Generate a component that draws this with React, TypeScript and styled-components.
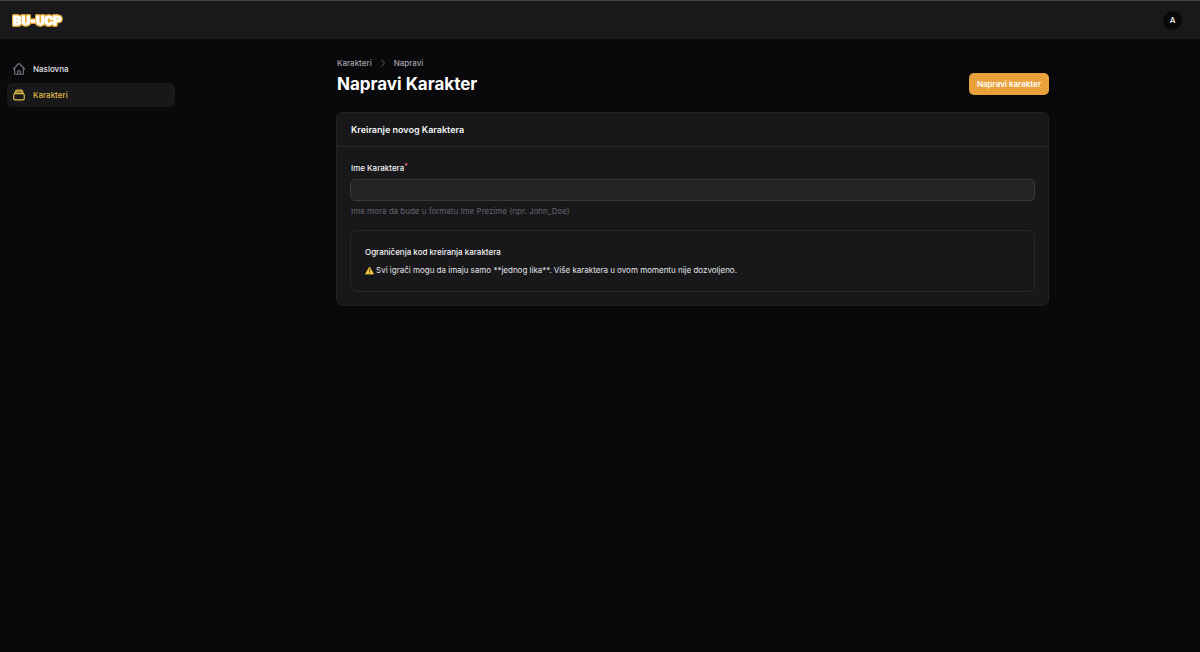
import React from 'react';
import styled, { createGlobalStyle, css } from 'styled-components';
import { HiOutlineHome, HiOutlineRectangleStack, HiOutlineChevronRight } from 'react-icons/hi2';

const GlobalStyle = createGlobalStyle`
  * { box-sizing: border-box; }
  html { background: #09090b; }
  body {
    margin: 0;
    background: #09090b;
    color: #f4f4f5;
    font-family: Inter, "Liberation Sans", sans-serif;
    font-size: 8px;
    line-height: 12px;
  }
  h1, h2, h3, p, ul, ol { margin: 0; padding: 0; }
  ul, ol { list-style: none; }
  a { color: inherit; text-decoration: none; }
  button, input { font: inherit; color: inherit; }
`;

const Page = styled.div`
  display: flex;
  flex-direction: column;
  min-height: 100vh;
`;

const Topbar = styled.header`
  display: flex;
  align-items: center;
  justify-content: space-between;
  height: 39px;
  padding: 0 18px 0 12px;
  border-top: 1px solid #424244;
  background: #19191b;
`;

const LogoLink = styled.a`
  display: block;
  line-height: 0;
`;

const LogoSvg = styled.svg`
  display: block;
  overflow: visible;
`;

const LogoText = styled.text`
  font-family: Roboto, sans-serif;
  font-size: 13px;
  font-weight: 900;
  fill: #fff;
  stroke: #fff;
  stroke-width: 1px;
  stroke-linejoin: miter;
  filter: drop-shadow(1px 0 0 #e5ab36) drop-shadow(-1px 0 0 #e5ab36)
    drop-shadow(0 1px 0 #e5ab36) drop-shadow(0 -1px 0 #e5ab36);
`;

const Avatar = styled.button`
  display: grid;
  place-items: center;
  width: 19px;
  height: 19px;
  padding: 0;
  border: 0;
  border-radius: 50%;
  background: #09090b;
  color: #fff;
  font-size: 8px;
  font-weight: 500;
`;

const Body = styled.div`
  display: flex;
  flex: 1;
`;

const Sidebar = styled.nav`
  flex: none;
  width: 185px;
  padding: 18px 10px 18px 7px;
`;

const NavList = styled.ul`
  display: flex;
  flex-direction: column;
  gap: 2px;
`;

const NavLink = styled.a<{ $active?: boolean }>`
  display: flex;
  align-items: center;
  gap: 7px;
  height: 24px;
  padding: 0 5px;
  border-radius: 5px;
  color: #e4e4e7;
  font-weight: 500;

  svg {
    width: 14px;
    height: 14px;
    color: #71717a;
    stroke-width: 2;
  }

  ${({ $active }) =>
    $active &&
    css`
      background: #18181a;
      color: #e0bb48;

      svg { color: #e0bb48; }
    `}
`;

const Main = styled.main`
  flex: 1;
  min-width: 0;
  padding: 18px;
`;

const Content = styled.div`
  width: 100%;
  max-width: 713px;
  margin: 0 auto;
`;

const PageHeader = styled.div`
  display: flex;
  align-items: center;
  justify-content: space-between;
  margin-bottom: 17px;
  padding-left: 1px;
`;

const Breadcrumbs = styled.ol`
  display: flex;
  align-items: center;
  gap: 6px;
  margin-bottom: 4px;
  color: #a1a1aa;
  font-weight: 500;

  li {
    display: flex;
    align-items: center;
    gap: 6px;
  }

  svg {
    width: 10px;
    height: 10px;
    color: #71717a;
    stroke-width: 2;
  }
`;

const Title = styled.h1`
  color: #fff;
  font-size: 17px;
  line-height: 22px;
  font-weight: 700;
`;

const PrimaryButton = styled.button`
  align-self: flex-end;
  height: 22px;
  padding: 0 8px;
  border: 0;
  border-radius: 5px;
  background: #e9a23b;
  color: #fff;
  font-weight: 600;
`;

const Card = styled.section`
  border: 1px solid #222225;
  border-radius: 7px;
  background: #18181b;
`;

const CardHeader = styled.div`
  padding: 10px 14px;
  border-bottom: 1px solid #29292c;
`;

const CardTitle = styled.h2`
  font-size: 9px;
  line-height: 13px;
  font-weight: 600;
`;

const CardBody = styled.div`
  display: flex;
  flex-direction: column;
  gap: 13px;
  padding: 14px 13px 13px;
`;

const Field = styled.div`
  display: flex;
  flex-direction: column;
  gap: 4px;
`;

const Label = styled.label`
  padding-left: 1px;
  line-height: 14px;
  font-weight: 500;
`;

const Required = styled.span`
  color: #f87171;
  font-size: 7px;
  line-height: 0;
  vertical-align: 2px;
`;

const TextInput = styled.input`
  width: 100%;
  height: 22px;
  padding: 0 7px;
  border: 1px solid #3a3a3d;
  border-radius: 5px;
  background: #242427;
  outline: none;
`;

const HelperText = styled.p`
  padding-left: 1px;
  color: #64646c;
`;

const Notice = styled.section`
  padding: 15px 14px;
  border: 1px solid #29292c;
  border-radius: 7px;
`;

const NoticeTitle = styled.h3`
  margin-bottom: 6px;
  font-size: 8px;
  line-height: 12px;
  font-weight: 500;
`;

const NoticeText = styled.p`
  display: flex;
  align-items: center;
  gap: 2px;
  color: #e4e4e7;
`;

function Logo() {
  return (
    <LogoSvg width="50" height="16" viewBox="0 0 50 16" role="img" aria-label="BU-UCP">
      <LogoText x="1" y="13">BU-UCP</LogoText>
    </LogoSvg>
  );
}

function WarningIcon() {
  return (
    <svg width="9" height="9" viewBox="0 0 18 18" aria-hidden="true">
      <path d="M9 2 L17 16 H1 Z" fill="#f6c83c" stroke="#f6c83c" strokeWidth="1.5" strokeLinejoin="round" />
      <path d="M9 6.5 V11" stroke="#2a2418" strokeWidth="1.6" strokeLinecap="round" />
      <circle cx="9" cy="13.8" r="1" fill="#2a2418" />
    </svg>
  );
}

export default function App() {
  return (
    <Page>
      <GlobalStyle />
      <Topbar>
        <LogoLink href="#"><Logo /></LogoLink>
        <Avatar type="button">A</Avatar>
      </Topbar>
      <Body>
        <Sidebar>
          <NavList>
            <li><NavLink href="#"><HiOutlineHome />Naslovna</NavLink></li>
            <li><NavLink href="#" $active aria-current="page"><HiOutlineRectangleStack />Karakteri</NavLink></li>
          </NavList>
        </Sidebar>
        <Main>
          <Content>
            <PageHeader>
              <div>
                <Breadcrumbs>
                  <li><a href="#">Karakteri</a></li>
                  <li><HiOutlineChevronRight /><a href="#">Napravi</a></li>
                </Breadcrumbs>
                <Title>Napravi Karakter</Title>
              </div>
              <PrimaryButton type="submit" form="character-form">Napravi karakter</PrimaryButton>
            </PageHeader>
            <Card>
              <CardHeader><CardTitle>Kreiranje novog Karaktera</CardTitle></CardHeader>
              <CardBody as="form" id="character-form" onSubmit={(e: React.FormEvent) => e.preventDefault()}>
                <Field>
                  <Label htmlFor="name">Ime Karaktera<Required>*</Required></Label>
                  <TextInput id="name" type="text" required aria-describedby="name-help" />
                  <HelperText id="name-help">Ime mora da bude u formatu Ime Prezime (npr. John_Doe)</HelperText>
                </Field>
                <Notice>
                  <NoticeTitle>Ograničenja kod kreiranja karaktera</NoticeTitle>
                  <NoticeText>
                    <WarningIcon />
                    <span>Svi igrači mogu da imaju samo **jednog lika**. Više karaktera u ovom momentu nije dozvoljeno.</span>
                  </NoticeText>
                </Notice>
              </CardBody>
            </Card>
          </Content>
        </Main>
      </Body>
    </Page>
  );
}
